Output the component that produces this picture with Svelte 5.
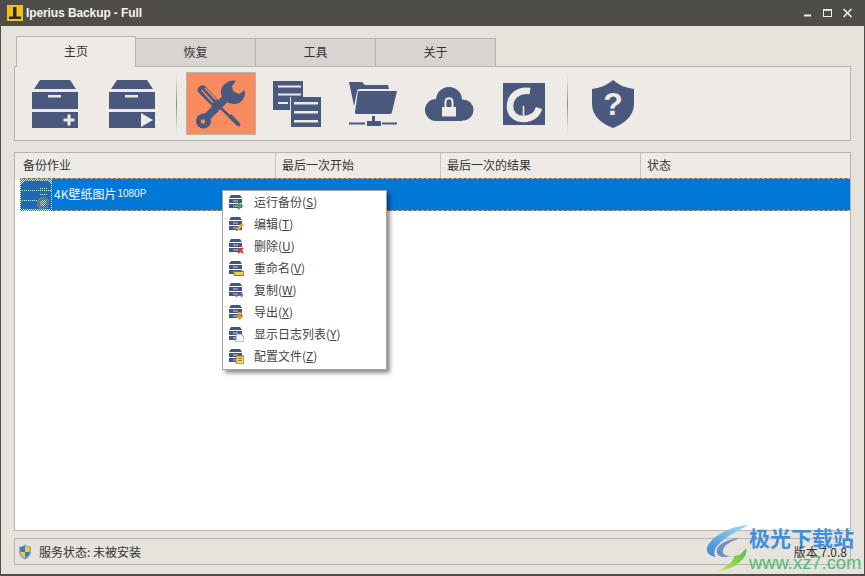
<script lang="ts">
  const tabs = ["主页", "恢复", "工具", "关于"];

  const columns = [
    { label: "备份作业", width: 261 },
    { label: "最后一次开始", width: 165 },
    { label: "最后一次的结果", width: 200 },
    { label: "状态", width: 209 },
  ];

  const menuItems = [
    { label: "运行备份", key: "S", badge: "run" },
    { label: "编辑", key: "T", badge: "edit" },
    { label: "删除", key: "U", badge: "delete" },
    { label: "重命名", key: "V", badge: "rename" },
    { label: "复制", key: "W", badge: "copy" },
    { label: "导出", key: "X", badge: "export" },
    { label: "显示日志列表", key: "Y", badge: "log" },
    { label: "配置文件", key: "Z", badge: "config" },
  ];
</script>

<div class="window">
  <header class="titlebar">
    <svg class="app-logo" viewBox="0 0 16 16" width="16" height="16">
      <rect width="16" height="16" fill="#f0c020" />
      <path d="M6 2h3.500v9.500H14v2.500H2v-2.500h4z" fill="#2a2a20" />
    </svg>
    <span class="title">Iperius Backup - Full</span>
    <div class="win-controls">
      <svg viewBox="0 0 60 14" width="60" height="14">
        <path d="M1 9.500h7" stroke="#f2f0ec" stroke-width="2" />
        <rect x="20.500" y="3.500" width="8" height="7" fill="none" stroke="#f2f0ec" />
        <path d="M20.500 4h8" stroke="#f2f0ec" stroke-width="1.600" />
        <path d="M40.500 3l8 8M48.500 3l-8 8" stroke="#f2f0ec" stroke-width="1.600" />
      </svg>
    </div>
  </header>

  <main class="content">
    <nav class="tabs">
      {#each tabs as tab, i}
        <div class="tab" class:active={i === 0}>{tab}</div>
      {/each}
    </nav>

    <section class="toolbar">
      <button class="tool">
        <svg viewBox="17 72 76 64" width="76" height="64">
          <path d="M40 80h30l6 9H34z" class="ink" />
          <path d="M32 92h46v17H32zM32 112h46v16H32z" class="ink" />
          <path d="M48 95h13v2.500H48z" class="cut" />
          <path d="M67.500 114.500h3v4h4v3h-4v4h-3v-4h-4v-3h4z" class="cut" />
        </svg>
      </button>
      <button class="tool">
        <svg viewBox="93 72 76 64" width="76" height="64">
          <path d="M117 80h30l6 9h-42z" class="ink" />
          <path d="M109 92h46v17h-46zM109 112h46v16h-46z" class="ink" />
          <path d="M125 95h13v2.500h-13z" class="cut" />
          <path d="M141 113l12 7-12 7z" class="cut" />
        </svg>
      </button>
      <span class="sep first"></span>
      <button class="tool selected">
        <svg viewBox="187 73 68 61" width="68" height="61">
          <!-- wrench -->
          <path d="M226 98L206 118" stroke="#4a587e" stroke-width="8" />
          <circle cx="203.500" cy="121" r="7.500" class="ink" />
          <circle cx="203" cy="121.500" r="2.200" fill="#f88c60" />
          <path d="M236 81c-7-2-15 4-15 11 0 8 7 12 13 12 7 0 12-6 11-14l-6 4-6-3-1-5z" class="ink" />
          <!-- screwdriver -->
          <path d="M198.500 87.500c2-2.500 5-3 7-1l14 15c1 1 1 2 0 3l-3 3c-1 1-2 1-3 0l-14-14c-2-2-2.500-4-1-6z" class="ink" />
          <path d="M201.500 90l11.500 12.500M205 88l11.500 12" stroke="#f88c60" stroke-width="1.300" />
          <path d="M221 108l9 9" stroke="#4a587e" stroke-width="2.500" />
          <path d="M228 117l3-3 8 8c1.500 2 1.500 3.500 1 4-1 .5-2.500 .5-4-1z" class="ink" />
        </svg>
      </button>
      <button class="tool list-tool">
        <svg viewBox="259 72 76 64" width="76" height="64">
          <path d="M273 81h30v16h-13v13h-17z" class="ink" />
          <path d="M278 85.500h23v2h-23zM278 93.500h23v2h-23zM278 102h10v2h-10z" class="cut" />
          <path d="M291 97h30v30h-30z" class="ink" />
          <path d="M294 102h24v2.500h-24zM294 111h24v2.500h-24zM294 120h24v2.500h-24z" class="cut" />
        </svg>
      </button>
      <button class="tool">
        <svg viewBox="335 72 76 64" width="76" height="64">
          <path d="M349 82h13l3 3h23l1 4h-29c-2 0-3 1-3 3l-3 14z" class="ink" />
          <path d="M358 91h39l-5 21c0 1-1 2-2 2h-34c-1 0-1-1-1-2z" class="ink" />
          <path d="M372 116h3v5h-3zM367 121h14v5h-14zM349 122.500h16v2h-16zM382 122.500h15v2h-15z" class="ink" />
        </svg>
      </button>
      <button class="tool">
        <svg viewBox="411 72 76 64" width="76" height="64">
          <circle cx="449" cy="100" r="13" class="ink" />
          <circle cx="436" cy="110" r="11" class="ink" />
          <circle cx="463" cy="110" r="10.500" class="ink" />
          <path d="M436 108h26v13h-26z" class="ink" />
          <path d="M445.500 107v-5c0-5 7-5 7 0v5" fill="none" stroke="#eeebe7" stroke-width="2" />
          <path d="M442 107h14v9.500h-14z" class="cut" />
        </svg>
      </button>
      <button class="tool">
        <svg viewBox="487 72 76 64" width="76" height="64">
          <path d="M503 83h42v42h-42z" class="ink" />
          <path d="M530 91c-12-2-20 6-20 15 0 9 6 13 14 13 7 0 13-4 15-11" fill="none" stroke="#eeebe7" stroke-width="6.500" />
          <path d="M523.500 106v10" stroke="#eeebe7" stroke-width="1.600" />
        </svg>
      </button>
      <span class="sep second"></span>
      <button class="tool">
        <svg viewBox="575 72 76 64" width="76" height="64">
          <path d="M613 80c-7 6-14 8-21 9v15c0 12 10 20 21 24 11-4 21-12 21-24V89c-7-1-14-3-21-9z" class="ink" />
          <text x="613" y="115" class="shield-mark">?</text>
        </svg>
      </button>
    </section>

    <section class="jobs">
      <div class="jobs-head">
        {#each columns as col}
          <div class="col" style="width: {col.width}px">{col.label}</div>
        {/each}
      </div>
      <div class="job-row">
        <svg class="job-icon" viewBox="0 0 32 32" width="32" height="32" shape-rendering="crispEdges">
          <defs>
            <pattern id="dither" width="2" height="2" patternUnits="userSpaceOnUse">
              <rect width="1" height="1" fill="#0078d7" />
              <rect x="1" y="1" width="1" height="1" fill="#0078d7" />
            </pattern>
          </defs>
          <rect width="32" height="32" fill="#fff" />
          <path d="M4 2h24l3 3v6H1V5zM1 12h30v18H1z" fill="#3f5a8c" />
          <path d="M20 9h7M20 15h7M8 11.500h16M1 21h21" stroke="#e4eaf4" />
          <circle cx="23" cy="24" r="6.500" fill="#c9792f" />
          <circle cx="23" cy="24" r="3" fill="#f2d0a0" />
          <rect width="32" height="32" fill="url(#dither)" />
        </svg>
        <span class="job-name">4K壁纸图片</span>
        <span class="job-res">1080P</span>
      </div>
    </section>

    <footer class="status">
      <svg viewBox="0 0 14 16" width="14" height="16">
        <path d="M7 0.500c-2 1.500-4 2-6 2v6c0 3 3 5.500 6 7 3-1.500 6-4 6-7v-6c-2 0-4-.5-6-2z" fill="#8ea0b5" />
        <path d="M7 2L2.500 3.500V8H7z" fill="#2c7fd0" />
        <path d="M7 2l4.500 1.500V8H7z" fill="#f3c92c" />
        <path d="M2.500 8H7v6c-2-1-4.500-3-4.500-6z" fill="#f3c92c" />
        <path d="M11.500 8H7v6c2-1 4.500-3 4.500-6z" fill="#2c7fd0" />
      </svg>
      <span>服务状态: 未被安装</span>
      <span class="version">版本 7.0.8</span>
    </footer>
  </main>

  <!-- context menu, lies over the job list -->
  <ul class="menu">
    {#each menuItems as item}
      <li>
        <svg viewBox="0 0 16 16" width="16" height="16">
          <path d="M3 1h9l2 3H1z" fill="#46557a" />
          <path d="M1 5h13v4H1zM1 10h13v4H1z" fill="#46557a" />
          <path d="M5 7h5M5 12h5" stroke="#c9d2e6" />
          {#if item.badge === "run"}
            <path d="M10 8l5.500 4-5.500 4z" fill="#4aa53a" />
          {:else if item.badge === "edit"}
            <path d="M8 15l1-3 5-5 2 2-5 5z" fill="#e0b040" />
            <path d="M8 15l1-2 1 1z" fill="#222" />
          {:else if item.badge === "delete"}
            <path d="M10 10l5 5M15 10l-5 5" stroke="#e03a30" stroke-width="2" />
          {:else if item.badge === "rename"}
            <path d="M6 11.500h10v4H6z" fill="#f2d04a" stroke="#6d6230" stroke-width=".8" />
          {:else if item.badge === "copy"}
            <path d="M7 13h8M7 13l2-2M7 13l2 2M15 13l-2-2M15 13l-2 2" stroke="#a860c8" stroke-width="1.200" fill="none" />
          {:else if item.badge === "export"}
            <path d="M10 8h3v4h2.500l-4 4-4-4H10z" fill="#e09a3a" />
          {:else if item.badge === "log"}
            <path d="M8 8h5l3 3v5H8z" fill="#f2f4f8" stroke="#7a859c" stroke-width=".8" />
          {:else}
            <path d="M8 8h8v8H8z" fill="#f2d070" stroke="#8c6d20" stroke-width=".8" />
            <path d="M10 10.500h4M10 12.500h4" stroke="#8c6d20" stroke-width=".8" />
          {/if}
        </svg>
        <span>{item.label}(<u>{item.key}</u>)</span>
      </li>
    {/each}
  </ul>

  <!-- download site watermark stamped over the corner -->
  <div class="watermark">
    <svg viewBox="0 0 48 50" width="48" height="50">
      <defs>
        <linearGradient id="sw-blue" x1="1" y1="0" x2="0" y2="1">
          <stop offset="0" stop-color="#9ddcf5" />
          <stop offset="1" stop-color="#3f86cf" />
        </linearGradient>
        <linearGradient id="sw-green" x1="1" y1="0" x2="0" y2="1">
          <stop offset="0" stop-color="#4fbe55" />
          <stop offset=".7" stop-color="#a8d84a" />
          <stop offset="1" stop-color="#f4e98c" />
        </linearGradient>
      </defs>
      <path d="M44 1C26 2 6 12 2 24c-1 5 3 8 9 9C6 27 12 16 44 1z" fill="url(#sw-blue)" />
      <path d="M36 14C22 15 10 21 12 29c1 4 8 5 14 3-6 0-9-2-8-6 1-5 8-9 18-12z" fill="#6d93bd" />
      <path d="M41 24c3 9-10 21-30 24 12-6 18-11 18-16 5 0 9-3 12-8z" fill="url(#sw-green)" />
    </svg>
    <div class="wm-text">
      <span class="wm-name">极光下载站</span>
      <span class="wm-url">www.xz7.com</span>
    </div>
  </div>
</div>

<style>
  :global(body) {
    margin: 0;
    background: #e6e2dc;
  }

  .window {
    position: relative;
    box-sizing: border-box;
    width: 865px;
    height: 576px;
    display: flex;
    flex-direction: column;
    border-left: 1px solid #4f4d48;
    border-right: 1px solid #4f4d48;
    border-bottom: 2px solid #4f4d48;
    background: #e6e2dc;
    color: #333;
    font: 12px "Noto Sans CJK SC", "Liberation Sans", sans-serif;
    overflow: hidden;
  }

  .titlebar {
    flex: none;
    height: 26px;
    display: flex;
    align-items: center;
    padding-left: 6px;
    background: #4f4d48;
    color: #f4f4f2;
  }

  .app-logo {
    margin-right: 3px;
  }

  .title {
    font: bold 12px "Liberation Sans", sans-serif;
    letter-spacing: -0.1px;
  }

  .win-controls {
    margin-left: auto;
    display: flex;
    margin-right: 1px;
  }

  .content {
    flex: 1;
    min-height: 0;
    display: flex;
    flex-direction: column;
    padding: 10px 13px 9px;
  }

  .tabs {
    display: flex;
    align-items: flex-end;
    height: 31px;
    margin-left: 2px;
    position: relative;
    z-index: 1;
    margin-bottom: -1px;
  }

  .tab {
    box-sizing: border-box;
    width: 120px;
    height: 29px;
    padding-bottom: 2px;
    display: flex;
    align-items: center;
    justify-content: center;
    background: #d8d5d1;
    border: 1px solid #b7b4ae;
    border-left: 0;
  }

  .tab.active {
    height: 31px;
    padding-bottom: 3px;
    background: #eeebe7;
    border-left: 1px solid #b7b4ae;
    border-bottom: 0;
  }

  .toolbar {
    box-sizing: border-box;
    height: 75px;
    display: flex;
    align-items: flex-start;
    padding: 5px 0 0 2px;
    background: #eeebe7;
    border: 1px solid #b7b4ae;
  }

  .tool {
    flex: none;
    width: 76px;
    height: 64px;
    padding: 0;
    border: 0;
    background: none;
    display: block;
  }

  .tool svg {
    display: block;
  }

  .tool.selected {
    box-sizing: border-box;
    width: 70px;
    height: 63px;
    background: #f88c60;
    border: 1px solid #b7b4ae;
  }

  .tool.list-tool {
    margin-left: 3px;
  }

  .ink {
    fill: #4a587e;
  }

  .cut {
    fill: #eeebe7;
  }

  .shield-mark {
    fill: #eeebe7;
    font: bold 32px "Liberation Sans", sans-serif;
    text-anchor: middle;
  }

  .sep {
    flex: none;
    width: 1px;
    height: 58px;
    margin-top: 3px;
    background: linear-gradient(#eeebe7, #8a8985 50%, #eeebe7);
  }

  .sep.first {
    margin: 3px 9px 0 7px;
  }

  .sep.second {
    margin: 3px 7px 0 4px;
  }

  .jobs {
    flex: 1;
    min-height: 0;
    margin-top: 11px;
    background: #fff;
    border: 1px solid #b7b4ae;
  }

  .jobs-head {
    display: flex;
    height: 25px;
    background: #eeebe7;
  }

  .col {
    box-sizing: border-box;
    flex: none;
    padding-left: 6px;
    line-height: 23px;
    border-right: 1px solid #c8c5bf;
    white-space: nowrap;
  }

  .col:first-child {
    padding-left: 8px;
  }

  .col:last-child {
    border-right: 0;
  }

  .job-row {
    box-sizing: border-box;
    height: 33px;
    margin-left: 5px;
    display: flex;
    align-items: center;
    gap: 1px;
    background: #0078d7;
    color: #f4f8fc;
    border-top: 1px dashed #e89a50;
    border-bottom: 1px dashed #e89a50;
  }

  .job-icon {
    flex: none;
    margin-right: 1px;
  }

  .job-name {
    padding-bottom: 2px;
  }

  .job-res {
    padding-bottom: 2px;
    font: 10px "Liberation Sans", sans-serif;
  }

  .status {
    flex: none;
    box-sizing: border-box;
    height: 27px;
    margin-top: 7px;
    display: flex;
    align-items: center;
    gap: 7px;
    padding: 0 3px;
    border: 1px solid #b7b4ae;
  }

  .version {
    margin-left: auto;
    position: relative;
    z-index: 3;
  }

  .menu {
    position: absolute;
    left: 221px;
    top: 190px;
    z-index: 2;
    box-sizing: border-box;
    width: 165px;
    height: 180px;
    margin: 0;
    padding: 0;
    list-style: none;
    background: #fff;
    border: 1px solid #a3a3a3;
    box-shadow: 3px 3px 4px rgba(0, 0, 0, 0.45);
    color: #444;
  }

  .menu li {
    height: 22px;
    display: flex;
    align-items: center;
    gap: 10px;
    padding-left: 5px;
  }

  .menu li span {
    padding-bottom: 2px;
  }

  .watermark {
    position: absolute;
    left: 704px;
    top: 524px;
    display: flex;
    pointer-events: none;
  }

  .wm-text {
    display: flex;
    flex-direction: column;
    margin-left: -4px;
    line-height: 1;
  }

  .wm-name {
    margin-top: 1px;
    font: bold 21px "Noto Sans CJK SC", sans-serif;
    line-height: 24px;
    color: #3f8fdc;
  }

  .wm-url {
    margin-top: 5px;
    font: 18.400px "Liberation Sans", sans-serif;
    line-height: 18px;
    color: #4fbe78;
  }
</style>
